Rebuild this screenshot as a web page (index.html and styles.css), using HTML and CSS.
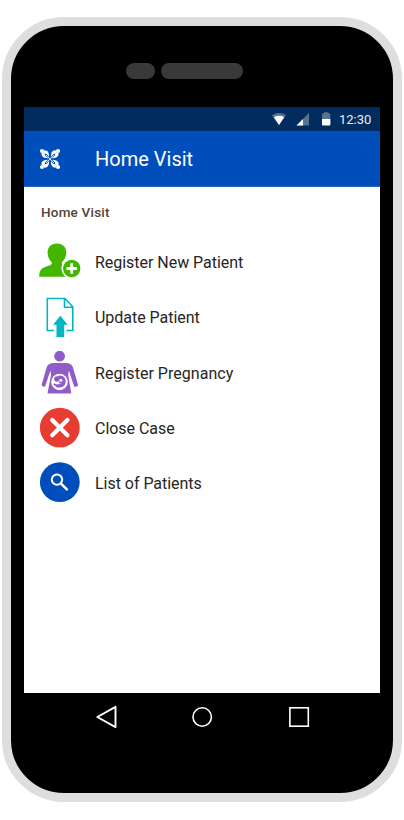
FILE: index.html
```html
<!DOCTYPE html>
<html lang="en">
<head>
<meta charset="utf-8">
<title>Home Visit</title>
<link rel="stylesheet" href="styles.css">
</head>
<body>
<div class="phone">
  <div class="speaker"><span class="sensor"></span><span class="earpiece"></span></div>
  <main class="screen">
    <div class="status">
      <svg class="signals" width="60" height="16" viewBox="0 0 60 16">
        <path fill="#58738f" d="M0 4.2Q7-.2 14 4.2L7 14Z"/>
        <path fill="#fff" d="M1.800 6.200Q7 3.300 12.200 6.200L7 14Z"/>
        <path fill="#58738f" d="M37 2V14.500H24.500Z"/>
        <path fill="#fff" d="M31 8V14.500H24.500Z"/>
        <path fill="#58738f" d="M50 2.500h2V1.300h4.500V2.500H58.300V8.500H50Z"/>
        <path fill="#fff" d="M50 8h8.400V13.500q0 1-1 1H51q-1 0-1-1Z"/>
      </svg>
      <span class="time">12:30</span>
    </div>
    <header class="appbar">
      <svg class="logo" width="22" height="22" viewBox="-11 -11 22 22">
        <g id="arm">
          <circle cx="-8" cy="-8" r="2.100" fill="#fff"/>
          <path fill="#fff" d="M-5.800-8.600Q-.8-9.300-.8-1.200Q-2.200-5-5.400-5.400Q-5-2.200-1.200-.8Q-9.300-.8-8.600-5.800L-7-6.300L-6.300-7Z"/>
          <path d="M-4-4L0 0" stroke="#fff" stroke-width=".8"/>
        </g>
        <use href="#arm" transform="rotate(90)"/>
        <use href="#arm" transform="rotate(180)"/>
        <use href="#arm" transform="rotate(270)"/>
      </svg>
      <h1>Home Visit</h1>
    </header>
    <h2>Home Visit</h2>
    <ul class="menu">
      <li>
        <svg width="42" height="44" viewBox="0 0 42 44">
          <path fill="#43b700" d="M18 2.600c6 0 9.500 4 9.200 9.400-.2 4.300-2.200 7.500-4.300 9.300-.4 2.200.8 3 4.600 4.100 5 1.500 7.500 4 7.500 10.300H.2c0-6 2-8.500 7-10.100 4.500-1.400 6-2.300 5.600-4.300C10.500 19.500 8.700 16 8.600 12 8.500 6.500 12 2.600 18 2.600Z"/>
          <circle cx="32.700" cy="27.500" r="10.300" fill="#fff"/>
          <circle cx="32.700" cy="27.500" r="8.700" fill="#43b700"/>
          <path d="M32.700 22.300v10.400M27.500 27.500h10.400" stroke="#fff" stroke-width="2.800"/>
        </svg>
        <span>Register New Patient</span>
      </li>
      <li>
        <svg width="42" height="44" viewBox="0 0 42 44">
          <path d="M15 34.500H8.300V2.500H26L33.800 10.800V34.500H27.500M25.500 2.500V11.200H33.800" fill="none" stroke="#00b7c2" stroke-width="1.600"/>
          <path fill="#00b7c2" d="M21.300 19.800L28.700 28.800H25.200V41H17.500V28.800H14Z"/>
        </svg>
        <span>Update Patient</span>
      </li>
      <li>
        <svg width="42" height="44" viewBox="0 0 42 44">
          <circle cx="20.600" cy="5.200" r="5.400" fill="#8f5cc8"/>
          <path fill="#8f5cc8" d="M14.500 12H27Q32.500 12 34 16.500L39 33.700Q39.200 35 38 35.500L35.200 35.800L29.800 19.500L29.200 24L32.300 42.500H8.500L12 24L11.500 19.500L6 35.800L3.300 35.300Q2.400 34.700 2.700 33.500L7.600 16.500Q9 12 14.500 12Z"/>
          <circle cx="20.500" cy="31" r="8.300" fill="#fff"/>
          <circle cx="18" cy="28" r="2.800" fill="#8f5cc8"/>
          <path d="M20.500 26.200Q26 26.500 25 31.500Q23.800 35.500 18.500 34.900" fill="none" stroke="#8f5cc8" stroke-width="3.200" stroke-linecap="round"/>
          <path d="M15.300 33.200L18.500 35.300M24 31.500H20.800" stroke="#8f5cc8" stroke-width="1.800" stroke-linecap="round"/>
        </svg>
        <span class="low">Register Pregnancy</span>
      </li>
      <li>
        <svg width="42" height="44" viewBox="0 0 42 44">
          <circle cx="20.800" cy="21.700" r="19.900" fill="#e73c31"/>
          <path d="M13.200 14.100L28.400 29.300M28.400 14.100L13.200 29.300" stroke="#fff" stroke-width="4.200" stroke-linecap="round"/>
        </svg>
        <span>Close Case</span>
      </li>
      <li>
        <svg width="42" height="44" viewBox="0 0 42 44">
          <circle cx="20.800" cy="21.200" r="19.900" fill="#004ebc"/>
          <circle cx="18" cy="18.600" r="5.200" fill="none" stroke="#fff" stroke-width="2"/>
          <path d="M22 22.600L28.600 29.200" stroke="#fff" stroke-width="2.400"/>
        </svg>
        <span>List of Patients</span>
      </li>
    </ul>
  </main>
  <nav class="nav">
    <svg width="22" height="24" viewBox="0 0 22 24"><path d="M20.500 1.800V22.100L2.300 12Z" fill="none" stroke="#fff" stroke-width="1.900" stroke-linejoin="round"/></svg>
    <svg width="22" height="24" viewBox="0 0 22 24"><circle cx="10.200" cy="12" r="9.200" fill="none" stroke="#fff" stroke-width="1.600"/></svg>
    <svg width="22" height="24" viewBox="0 0 22 24"><rect x="1.900" y="2.800" width="18.400" height="18.400" fill="none" stroke="#fff" stroke-width="1.600"/></svg>
  </nav>
</div>
</body>
</html>
```
FILE: styles.css
```css
* { box-sizing: border-box; }
body {
  margin: 0;
  padding: 17px 2px 0;
  background: #fff;
  font-family: Roboto, sans-serif;
}
.phone {
  width: 400px;
  height: 785px;
  border: 9px solid #dedede;
  border-radius: 62px;
  background: #000;
  padding: 37px 13px 0;
}
.speaker {
  display: flex;
  gap: 6px;
  height: 44px;
  padding-left: 102px;
}
.speaker span {
  height: 16px;
  border-radius: 8px;
  background: #393939;
}
.sensor { width: 29px; }
.earpiece { width: 82px; }
.screen {
  height: 586px;
  background: #fff;
}
.status {
  display: flex;
  justify-content: flex-end;
  align-items: center;
  height: 24px;
  padding-right: 9px;
  background: #002c5f;
}
.signals { margin-right: 7px; }
.time {
  width: 32px;
  color: #e9eef4;
  font-size: 13px;
  line-height: 25px;
  white-space: nowrap;
}
.appbar {
  display: flex;
  align-items: center;
  height: 56px;
  padding-left: 15px;
  background: #004ebc;
  border-bottom: 1px solid #2b68c4;
}
.logo { margin-right: 34px; }
h1 {
  margin: 0;
  color: #fff;
  font-size: 20px;
  font-weight: 400;
  letter-spacing: 0;
}
h2 {
  height: 48px;
  margin: 0;
  padding: 1px 0 0 17px;
  color: #53443b;
  font-size: 13.500px;
  font-weight: 500;
  letter-spacing: .2px;
  line-height: 48px;
}
.menu {
  margin: 0;
  padding: 0 0 0 15px;
  list-style: none;
}
.menu li {
  display: flex;
  align-items: center;
  gap: 14px;
  height: 55.200px;
  color: #252525;
  font-size: 16px;
  letter-spacing: -.03px;
}
.menu .low {
  padding-top: 1px;
  letter-spacing: .03px;
}
.nav {
  display: flex;
  justify-content: space-between;
  height: 48px;
  padding: 12px 70px 0 71px;
}
```
